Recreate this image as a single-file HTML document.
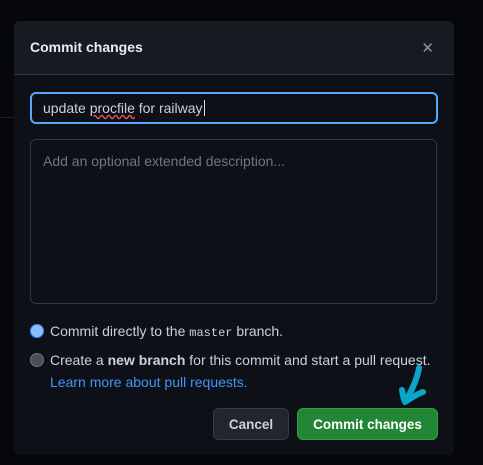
<!DOCTYPE html><html><head><style>
body{margin:0;width:483px;height:465px;background:#05070b;font-family:"Liberation Sans",sans-serif;position:relative;overflow:hidden}
.m{position:absolute;left:14px;top:21px;width:440px;height:434px;background:#0d1117;border-radius:6px;overflow:hidden}
.h{height:53px;background:#161b22;border-bottom:1px solid #30363d;position:relative}
.h b{position:absolute;left:16px;top:18px;color:#e6edf3;font-size:14px}
.x{position:absolute;right:20px;top:18px;color:#8b949e;font-size:15px}
.in{position:absolute;left:16px;top:71px;width:404px;height:28px;border:2px solid #58a6ff;border-radius:6px;box-sizing:content-box;color:#c9d1d9;font-size:14px;line-height:28px;text-indent:11px}
.ta{position:absolute;left:16px;top:118px;width:407px;height:165px;border:1px solid #30363d;border-radius:6px;color:#6e7681;font-size:14px;padding:13px 0 0 12px;box-sizing:border-box}
.r{position:absolute;left:16px;width:12px;height:12px;border-radius:50%}
.t{position:absolute;left:36px;color:#c9d1d9;font-size:14px}
.btn{position:absolute;top:387px;height:32px;border-radius:6px;font-size:13.5px;font-weight:bold;text-align:center;line-height:32px;box-sizing:border-box}
</style></head><body>
<div style="position:absolute;left:0;top:117px;width:14px;height:1px;background:#1c2128"></div>
<div class="m">
<div class="h"><b>Commit changes</b><span class="x">✕</span></div>
<div class="in">update <span style="text-decoration:underline wavy #e5534b">procfile</span> for railway<span style="border-left:1px solid #ddd;margin-left:1px"></span></div>
<div class="ta">Add an optional extended description...</div>
<div class="r" style="top:303px;background:#8fbcff;border:1px solid #388bfd"></div>
<div class="t" style="top:302px">Commit directly to the <span style="font-family:'Liberation Mono',monospace;font-size:12px">master</span> branch.</div>
<div class="r" style="top:332px;background:#484f58;border:1px solid #6e7681"></div>
<div class="t" style="top:331px">Create a <b>new branch</b> for this commit and start a pull request.</div>
<div class="t" style="top:353px;color:#4493f8">Learn more about pull requests.</div>
<div class="btn" style="left:199px;width:76px;background:#21262d;border:1px solid #363b42;color:#c9d1d9">Cancel</div>
<div class="btn" style="left:283px;width:141px;background:#238636;border:1px solid #2ea043;color:#fff">Commit changes</div>
</div>
<svg style="position:absolute;left:395px;top:362px" width="40" height="46"><path d="M24 6 C22 18 16 30 10 40 M7 28 C8 34 9 38 10 40 C16 36 22 32 28 30" stroke="#0aa6c9" stroke-width="6" fill="none" stroke-linecap="round" stroke-linejoin="round"/></svg>
</body></html>
